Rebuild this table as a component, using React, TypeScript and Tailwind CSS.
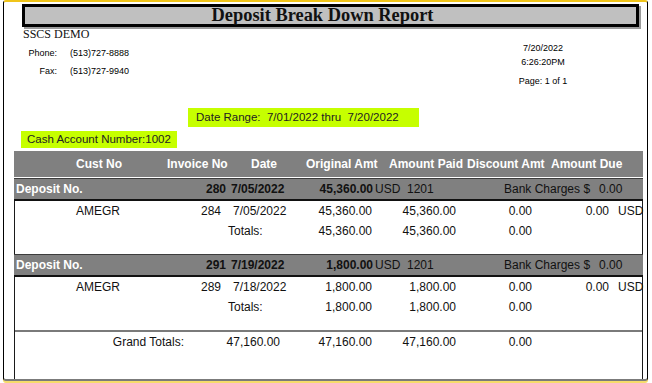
import React from 'react';

const sans = "font-['Liberation_Sans',Arial,sans-serif]";

type Deposit = {
  no: string;
  date: string;
  amount: string;
  account: string;
  cust: string;
  invoice: string;
  invDate: string;
  original: string;
  paid: string;
};

const deposits: Deposit[] = [
  { no: '280', date: '7/05/2022', amount: '45,360.00', account: '1201', cust: 'AMEGR', invoice: '284', invDate: '7/05/2022', original: '45,360.00', paid: '45,360.00' },
  { no: '291', date: '7/19/2022', amount: '1,800.00', account: '1201', cust: 'AMEGR', invoice: '289', invDate: '7/18/2022', original: '1,800.00', paid: '1,800.00' },
];

function DepositBlock({ d }: { d: Deposit }) {
  return (
    <div>
      {/* deposit band */}
      <div className="-mx-px flex h-[23px] items-center border-t border-b-2 border-t-[#3c3c3c] border-b-[#111] bg-[#808080] text-[12px] text-[#111]">
        <div className="flex w-[212px] shrink-0 justify-between pl-[2px] font-bold">
          <span className="text-white">Deposit No.</span>
          <span>{d.no}</span>
        </div>
        <div className="flex w-[147px] shrink-0 justify-between pl-[5px] font-bold">
          <span>{d.date}</span>
          <span>{d.amount}</span>
        </div>
        <div className="w-[34px] shrink-0 pl-[2px]">USD</div>
        <div className="w-[97px] shrink-0">{d.account}</div>
        <div className="w-[95px] shrink-0">Bank Charges $</div>
        <div>0.00</div>
      </div>

      {/* invoice line */}
      <div className="flex h-[20px] items-center text-[12px] text-[#111]">
        <div className="w-[61px] shrink-0" />
        <div className="flex w-[145px] shrink-0 justify-between">
          <span>{d.cust}</span>
          <span>{d.invoice}</span>
        </div>
        <div className="w-[84px] shrink-0 pl-[12px]">{d.invDate}</div>
        <div className="w-[67px] shrink-0 text-right">{d.original}</div>
        <div className="w-[84px] shrink-0 text-right">{d.paid}</div>
        <div className="w-[76px] shrink-0 text-right">0.00</div>
        <div className="w-[77px] shrink-0 text-right">0.00</div>
        <div className="whitespace-nowrap pl-[9px]">USD</div>
      </div>

      {/* totals */}
      <div className="flex h-[20px] items-center text-[12px] text-[#111]">
        <div className="w-[206px] shrink-0" />
        <div className="w-[84px] shrink-0 pl-[7px]">Totals:</div>
        <div className="w-[67px] shrink-0 text-right">{d.original}</div>
        <div className="w-[84px] shrink-0 text-right">{d.paid}</div>
        <div className="w-[76px] shrink-0 text-right">0.00</div>
      </div>
      <div className="h-[13px]" />
    </div>
  );
}

export default function App() {
  return (
    <div className={`h-[383px] w-[652px] overflow-hidden bg-white text-black ${sans}`}>
      <div className="ml-[3px] flex h-[381px] w-[645px] flex-col overflow-hidden rounded-[3px] border-x border-t-2 border-b-2 border-x-black border-t-[#f0c419] border-b-[#7b7b7b] bg-white shadow-[0_2px_0_#f6dc6a]">
        {/* title */}
        <div className="ml-[18px] mt-[2px] flex h-[23px] w-[617px] shrink-0 items-center justify-center border-[3px] border-black bg-[#c0c0c0] pr-[16px] shadow-[2px_2px_0_#9a9a9a]">
          <span className="font-['Liberation_Serif','Times_New_Roman',serif] text-[18.4px] font-bold leading-none text-[#111]">
            Deposit Break Down Report
          </span>
        </div>

        {/* company + print info */}
        <div className="flex shrink-0">
          <div className="ml-[19px]">
            <div className="font-['Liberation_Serif','Times_New_Roman',serif] text-[12px] leading-[14px] text-[#111]">SSCS DEMO</div>
            <div className="mt-[6px] grid grid-cols-[34px_1fr] gap-x-[13px] gap-y-[6px] text-[9px] leading-[12px]">
              <span className="text-right">Phone:</span>
              <span>(513)727-8888</span>
              <span className="text-right">Fax:</span>
              <span>(513)727-9940</span>
            </div>
          </div>
          <div className="ml-auto mr-[74px] mt-[15px] w-[60px] text-center text-[9px] leading-[12px]">
            <div>7/20/2022</div>
            <div className="mt-[2px]">6:26:20PM</div>
            <div className="mt-[7px]">Page: 1 of 1</div>
          </div>
        </div>

        {/* filters */}
        <div className="ml-[184px] mt-[21px] flex h-[19px] w-[231px] shrink-0 items-center bg-[#c6ff00] pl-[8px] text-[11.5px] text-[#222]">
          <span className="whitespace-pre">Date Range:  7/01/2022 thru  7/20/2022</span>
        </div>
        <div className="ml-[17px] mt-[4px] flex h-[17px] w-[156px] shrink-0 items-center bg-[#c6ff00] pl-[6px] text-[11.5px] text-[#222]">
          Cash Account Number:1002
        </div>

        {/* table */}
        <div className="ml-[10px] mt-[3px] flex w-[629px] flex-1 flex-col">
          <div className="flex h-[26px] shrink-0 items-center bg-[#808080] text-[12px] font-bold text-white">
            <div className="w-[62px] shrink-0" />
            <div className="w-[91px] shrink-0">Cust No</div>
            <div className="w-[84px] shrink-0">Invoice No</div>
            <div className="w-[55px] shrink-0">Date</div>
            <div className="w-[83px] shrink-0">Original Amt</div>
            <div className="w-[78px] shrink-0">Amount Paid</div>
            <div className="w-[84px] shrink-0">Discount Amt</div>
            <div>Amount Due</div>
          </div>

          <div className="mt-px flex-1 border-x border-[#1a1a1a]">
            {deposits.map(d => (
              <DepositBlock key={d.no} d={d} />
            ))}

            <div className="border-t-2 border-[#7a7a7a]" />
            <div className="flex h-[20px] items-center text-[12px] text-[#111]">
              <div className="w-[169px] shrink-0 text-right">Grand Totals:</div>
              <div className="w-[96px] shrink-0 text-right">47,160.00</div>
              <div className="w-[92px] shrink-0 text-right">47,160.00</div>
              <div className="w-[84px] shrink-0 text-right">47,160.00</div>
              <div className="w-[76px] shrink-0 text-right">0.00</div>
            </div>
          </div>
        </div>
      </div>
    </div>
  );
}
